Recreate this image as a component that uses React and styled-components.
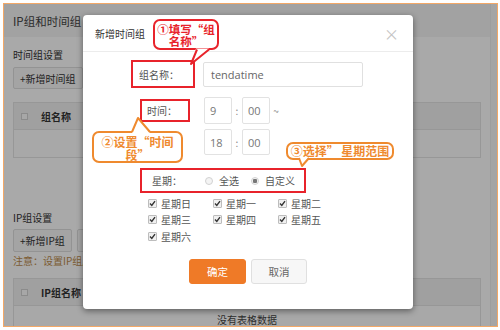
import React from 'react';
import styled, { createGlobalStyle } from 'styled-components';

const Global = createGlobalStyle`
  html, body { margin: 0; padding: 0; background: #fff; }
  body { font-family: "Noto Sans CJK SC", "Noto Sans", sans-serif; }
  * { box-sizing: border-box; }
`;

const Root = styled.div`
  position: relative;
  width: 500px;
  height: 330px;
  overflow: hidden;
  padding: 3px 2px 3px 3px;
  background: #fff;
`;

const Frame = styled.div`
  position: relative;
  height: 100%;
  border: 1.5px solid #f3a867;
  background: #fcfcfc;
  overflow: hidden;
  display: flex;
`;

const Main = styled.div`
  flex: 1;
  display: flex;
  flex-direction: column;
`;

const Strip = styled.div`
  width: 7px;
  border-left: 1px solid #ececec;
  background: #f7f7f7;
`;

const PageHeader = styled.div`
  height: 33px;
  flex: none;
  background: #f2f2f2;
  display: flex;
  align-items: center;
  padding-left: 9px;
  font-size: 11.5px;
  color: #444;
`;

const Section = styled.div`
  padding: 0 9px;
  display: flex;
  flex-direction: column;
`;

const SectionTitle = styled.div`
  margin-top: ${p => p.mt}px;
  height: 16px;
  line-height: 16px;
  font-size: 10px;
  color: #333;
`;

const BtnRow = styled.div`
  margin-top: ${p => p.mt}px;
  display: flex;
  gap: 5px;
`;

const GhostBtn = styled.div`
  height: ${p => p.h}px;
  padding: 0 6px;
  display: flex;
  align-items: center;
  background: #f5f5f5;
  border: 1px solid #dcdcdc;
  border-radius: 2px;
  font-size: 10px;
  color: #333;
`;

const Note = styled.div`
  margin-top: 1px;
  height: 15px;
  line-height: 15px;
  font-size: 10px;
  color: #b98a4c;
`;

const Table = styled.div`
  margin-top: ${p => p.mt}px;
  border: 1px solid #e2e2e2;
`;

const THead = styled.div`
  height: 27px;
  background: #efefef;
  display: flex;
  align-items: center;
  padding-left: 7px;
  border-bottom: 1px solid #e2e2e2;
  font-size: 10px;
  font-weight: bold;
  color: #333;
`;

const TRow = styled.div`
  height: 27px;
  display: flex;
  align-items: center;
  justify-content: center;
  font-size: 10px;
  color: #444;
  background: #fbfbfb;
`;

const SmallBox = styled.span`
  width: 7px;
  height: 7px;
  border: 1px solid #cfcfcf;
  background: #fafafa;
  margin-right: 13px;
`;

const Overlay = styled.div`
  position: absolute;
  inset: 0;
  background: rgba(0, 0, 0, 0.33);
`;

/* ---------- modal ---------- */

const Modal = styled.div`
  position: absolute;
  left: 83px;
  top: 15px;
  width: 330px;
  height: 294px;
  background: #fff;
  border-radius: 4px;
  box-shadow: 0 2px 6px rgba(0, 0, 0, 0.45);
  display: flex;
  flex-direction: column;
`;

const ModalHeader = styled.div`
  height: 37px;
  flex: none;
  border-bottom: 1px solid #ececec;
  display: flex;
  align-items: center;
  justify-content: space-between;
  padding: 0 14px 0 12px;
  font-size: 10px;
  color: #333;
`;

const Close = styled.span`
  font-size: 15px;
  color: #c4c4c4;
  line-height: 1;
`;

const ModalBody = styled.div`
  display: flex;
  flex-direction: column;
`;

const FormRow = styled.div`
  margin-top: ${p => p.mt}px;
  display: flex;
  align-items: center;
  height: ${p => p.h}px;
`;

const LabelCell = styled.div`
  width: 120px;
  flex: none;
  display: flex;
  justify-content: flex-end;
  padding-right: ${p => p.pr}px;
`;

const Mark = styled.div`
  height: ${p => p.h}px;
  display: flex;
  align-items: center;
  padding: 0 ${p => p.padR}px 0 ${p => p.padL}px;
  border: 2px solid #e8232b;
  font-size: 10px;
  color: #555;
`;

const TextInput = styled.div`
  width: 160px;
  height: 25px;
  border: 1px solid #e0e0e0;
  border-radius: 2px;
  display: flex;
  align-items: center;
  padding-left: 7px;
  font-family: "Open Sans", "Noto Sans", sans-serif;
  font-size: 11px;
  color: #666;
`;

const TimeInput = styled.div`
  width: 28px;
  height: ${p => p.h}px;
  margin-left: ${p => p.ml || 0}px;
  border: 1px solid #e2e2e2;
  border-radius: 2px;
  display: flex;
  align-items: center;
  padding-left: 5px;
  font-family: "Open Sans", "Noto Sans", sans-serif;
  font-size: 11px;
  color: #777;
`;

const Sep = styled.span`
  width: ${p => p.w}px;
  text-align: center;
  font-size: 10px;
  color: #888;
`;

const WeekBox = styled.div`
  margin: 13px 0 0 57px;
  width: 166px;
  height: 25px;
  border: 2px solid #e8232b;
  display: flex;
  align-items: center;
  padding-left: 10px;
  font-size: 10px;
  color: #555;
`;

const WeekLabel = styled.span`
  width: 53px;
`;

const Radio = styled.span`
  width: 8px;
  height: 8px;
  border-radius: 50%;
  border: 1px solid #d2d2d2;
  background: ${p => (p.on ? 'radial-gradient(circle, #777 0 2px, #f3f3f3 2.5px)' : '#f4f4f4')};
  margin-right: 6px;
`;

const RadioText = styled.span`
  margin-right: ${p => p.mr || 0}px;
`;

const DayGrid = styled.div`
  margin: 2px 0 0 65px;
  display: grid;
  grid-template-columns: repeat(3, 65px);
  grid-auto-rows: 16.5px;
`;

const Day = styled.div`
  display: flex;
  align-items: center;
  font-size: 10px;
  color: #555;
`;

const Check = styled.span`
  width: 9px;
  height: 9px;
  border: 1px solid #bdbdbd;
  background: #f0f0f0;
  border-radius: 1px;
  margin-right: 4px;
  display: flex;
  align-items: center;
  justify-content: center;
`;

const Actions = styled.div`
  margin-top: 14px;
  display: flex;
  justify-content: center;
  gap: 5px;
`;

const Button = styled.div`
  width: ${p => p.w}px;
  height: 25px;
  border-radius: 3px;
  display: flex;
  align-items: center;
  justify-content: center;
  font-size: 10.5px;
  background: ${p => (p.primary ? '#ef7a27' : '#f7f7f7')};
  color: ${p => (p.primary ? '#fff' : '#666')};
  border: 1px solid ${p => (p.primary ? '#ef7a27' : '#e0e0e0')};
`;

/* ---------- callouts ---------- */

const Callout = styled.div`
  position: absolute;
  left: ${p => p.x}px;
  top: ${p => p.y}px;
  width: ${p => p.w}px;
  height: ${p => p.h}px;
  border: 2px solid ${p => p.c};
  border-radius: 7px;
  background: #fff;
  color: ${p => p.c};
  font-weight: bold;
  font-size: ${p => p.fs}px;
  line-height: ${p => p.lh}px;
  text-align: center;
  padding-top: ${p => p.pt}px;
  white-space: nowrap;
`;

const Tail = styled.svg`
  position: absolute;
  left: 0;
  top: 0;
  overflow: visible;
`;

const CheckIcon = () => (
  <svg width="7" height="7" viewBox="0 0 7 7">
    <path d="M1 3.6 L2.8 5.4 L6 1.2" fill="none" stroke="#333" strokeWidth="1.4" />
  </svg>
);

const days = ['星期日', '星期一', '星期二', '星期三', '星期四', '星期五', '星期六'];

export default function App() {
  return (
    <Root>
      <Global />
      <Frame>
        <Main>
          <PageHeader>IP组和时间组</PageHeader>
          <Section>
            <SectionTitle mt={10}>时间组设置</SectionTitle>
            <BtnRow mt={4}>
              <GhostBtn h={22}>+新增时间组</GhostBtn>
            </BtnRow>
            <Table mt={13}>
              <THead><SmallBox />组名称</THead>
              <TRow />
            </Table>
            <SectionTitle mt={52}>IP组设置</SectionTitle>
            <BtnRow mt={3}>
              <GhostBtn h={23}>+新增IP组</GhostBtn>
              <GhostBtn h={23}>删除</GhostBtn>
            </BtnRow>
            <Note>注意：设置IP组后，请在上网行为管理中引用</Note>
            <Table mt={10}>
              <THead><SmallBox />IP组名称</THead>
              <TRow>没有表格数据</TRow>
            </Table>
          </Section>
        </Main>
        <Strip />
        <Overlay />
      </Frame>

      <Modal>
        <ModalHeader>
          <span>新增时间组</span>
          <Close>×</Close>
        </ModalHeader>
        <ModalBody>
          <FormRow mt={8} h={28}>
            <LabelCell pr={8}>
              <Mark h={28} padL={6} padR={14}>组名称：</Mark>
            </LabelCell>
            <TextInput>tendatime</TextInput>
          </FormRow>
          <FormRow mt={9} h={27}>
            <LabelCell pr={13}>
              <Mark h={23} padL={5} padR={11}>时间：</Mark>
            </LabelCell>
            <TimeInput h={27} ml={1}>9</TimeInput>
            <Sep w={10}>:</Sep>
            <TimeInput h={27}>00</TimeInput>
            <Sep w={12}>~</Sep>
          </FormRow>
          <FormRow mt={5} h={26}>
            <LabelCell pr={0} />
            <TimeInput h={26} ml={1}>18</TimeInput>
            <Sep w={10}>:</Sep>
            <TimeInput h={26}>00</TimeInput>
          </FormRow>
          <WeekBox>
            <WeekLabel>星期：</WeekLabel>
            <Radio />
            <RadioText mr={12}>全选</RadioText>
            <Radio on />
            <RadioText>自定义</RadioText>
          </WeekBox>
          <DayGrid>
            {days.map(d => (
              <Day key={d}>
                <Check><CheckIcon /></Check>
                {d}
              </Day>
            ))}
          </DayGrid>
          <Actions>
            <Button primary w={57}>确定</Button>
            <Button w={56}>取消</Button>
          </Actions>
        </ModalBody>
      </Modal>

      <Callout x={153} y={19} w={66} h={31} c="#e8232b" fs={11.5} lh={12.5} pt={1.5}>
        ①填写“组<br />名称”
        <Tail width="1" height="1">
          <polygon points="41,27.5 54,27.5 36,43" fill="#fff" />
          <polyline points="42,28.5 36,43 54,28.5" fill="none" stroke="#e8232b" strokeWidth="2" strokeLinejoin="round" />
        </Tail>
      </Callout>

      <Callout x={92} y={131} w={91} h={32} c="#ef8a2e" fs={12} lh={13} pt={1.5}>
        ②设置“时间<br />段”
        <Tail width="1" height="1">
          <polygon points="38,0 56,0 44,-15" fill="#fff" />
          <polyline points="38,-1 44,-15 56,-1" fill="none" stroke="#ef8a2e" strokeWidth="2" strokeLinejoin="round" />
        </Tail>
      </Callout>

      <Callout x={286} y={142} w={108} h={18} c="#ef8a2e" fs={12} lh={13} pt={0}>
        ③选择” 星期范围
        <Tail width="1" height="1">
          <polygon points="11,13 21,13 14,22" fill="#fff" />
          <polyline points="11,14 14,22 21,14" fill="none" stroke="#ef8a2e" strokeWidth="2" strokeLinejoin="round" />
        </Tail>
      </Callout>
    </Root>
  );
}
